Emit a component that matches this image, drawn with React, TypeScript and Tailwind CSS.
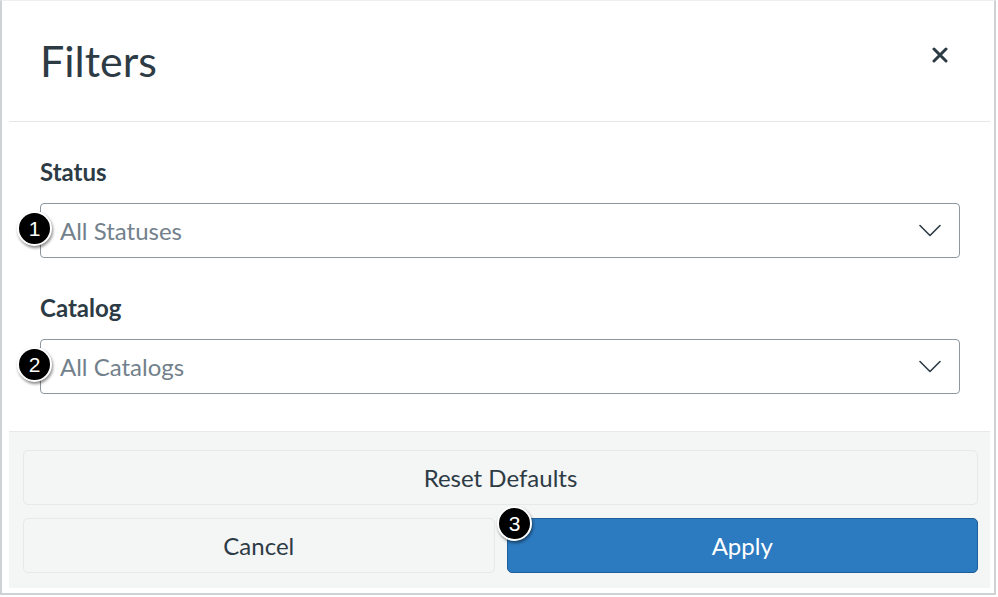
import React from "react";

function Badge({ n, className }: { n: number; className: string }) {
  return (
    <div
      className={`absolute z-10 flex h-[35px] w-[35px] items-center justify-center rounded-full border-2 border-white bg-black text-[21px] leading-none text-white shadow-[1px_2px_3px_rgba(0,0,0,0.45)] ${className}`}
      style={{ fontFamily: '"Liberation Sans", Arial, sans-serif' }}
    >
      {n}
    </div>
  );
}

function Chevron() {
  return (
    <svg width="22" height="13" viewBox="0 0 22 13" fill="none">
      <path d="M1 1.5 L11 11.5 L21 1.5" stroke="#2d3b45" strokeWidth="1.6" strokeLinecap="round" strokeLinejoin="round" />
    </svg>
  );
}

function SelectBox({ placeholder }: { placeholder: string }) {
  return (
    <div className="flex h-[55px] w-full items-center justify-between rounded-[4px] border border-[#8d979f] bg-white pl-[19px] pr-[18px]">
      <span className="text-[24px] text-[#73818c]">{placeholder}</span>
      <Chevron />
    </div>
  );
}

export default function App() {
  return (
    <div
      className="h-[597px] w-[998px] bg-white text-[#2d3b45]"
      style={{ fontFamily: "Lato, 'Noto Sans', sans-serif" }}
    >
      <div className="flex h-[595px] w-[996px] flex-col border-x-2 border-b-2 border-t border-[#cfd2d4] border-t-[#eeeeee] pb-[5px] pl-[7px] pr-[4px]">
        {/* Header */}
        <div className="flex h-[121px] shrink-0 items-center justify-between border-b border-[#e4e6e8] pl-[31px] pr-[42px]">
          <h1 className="text-[43px] font-normal leading-[1.2]">Filters</h1>
          <svg width="16" height="16" viewBox="0 0 16 16" className="mb-[12px]">
            <path d="M2 2 L14 14 M14 2 L2 14" stroke="#2d3b45" strokeWidth="3" strokeLinecap="round" />
          </svg>
        </div>

        {/* Body */}
        <div className="relative flex-1 pl-[31px] pr-[30px] pt-[36px]">
          <Badge n={1} className="left-[8px] top-[89px]" />
          <Badge n={2} className="left-[8px] top-[225px]" />
          <div className="text-[24px] font-bold leading-[28px]">Status</div>
          <div className="mt-[17px]">
            <SelectBox placeholder="All Statuses" />
          </div>
          <div className="mt-[36px] text-[24px] font-bold leading-[28px]">Catalog</div>
          <div className="mt-[17px]">
            <SelectBox placeholder="All Catalogs" />
          </div>
        </div>

        {/* Footer */}
        <div className="relative flex shrink-0 flex-col gap-[13px] border-t border-[#e6e8ea] bg-[#f4f5f5] pb-[15px] pl-[14px] pr-[12px] pt-[18px]">
          <button className="flex h-[55px] items-center justify-center rounded-[5px] border border-[#e6e8e9] bg-[#f4f5f5] text-[24px] text-[#2d3b45]">
            Reset Defaults
          </button>
          <div className="relative flex gap-[12px]">
            <button className="flex h-[55px] flex-1 items-center justify-center rounded-[5px] border border-[#e6e8e9] bg-[#f4f5f5] text-[24px] text-[#2d3b45]">
              Cancel
            </button>
            <button className="flex h-[55px] flex-1 items-center justify-center rounded-[5px] border border-[#1f5f99] bg-[#2c7abf] text-[24px] text-white">
              Apply
            </button>
            <Badge n={3} className="left-[474px] top-[-12px]" />
          </div>
        </div>
      </div>
    </div>
  );
}
